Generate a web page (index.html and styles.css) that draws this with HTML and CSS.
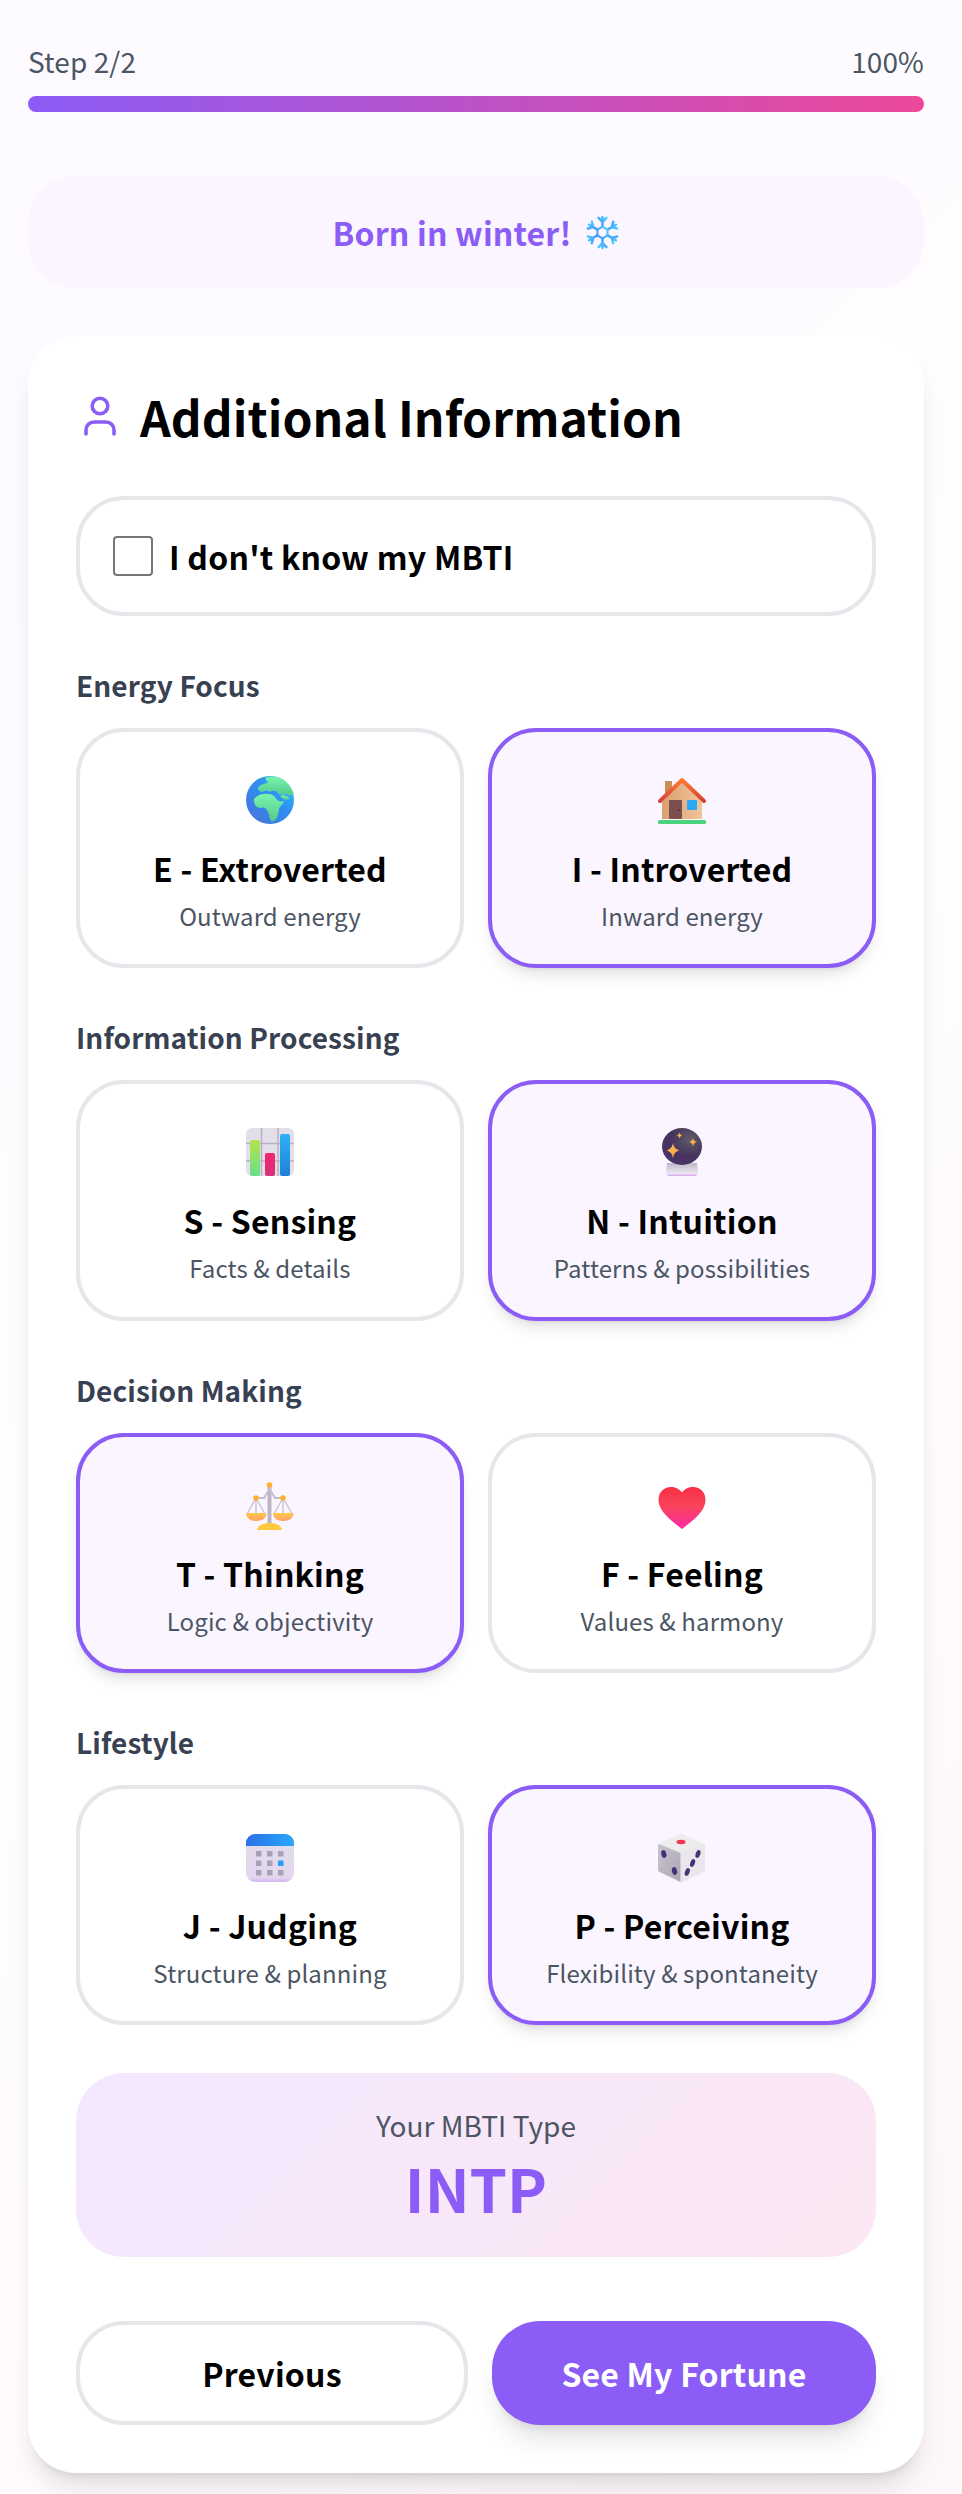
FILE: index.html
```html
<!DOCTYPE html>
<html lang="en">
<head>
<meta charset="utf-8">
<title>Additional Information</title>
<link rel="stylesheet" href="styles.css">
</head>
<body>
<svg class="defs" aria-hidden="true">
  <defs>
    <linearGradient id="g-globe" x1="0" y1="1" x2="1" y2="0"><stop offset="0" stop-color="#4a6fd8"/><stop offset=".55" stop-color="#2f8ff0"/><stop offset="1" stop-color="#2fc0ff"/></linearGradient>
    <linearGradient id="g-land" x1="0" y1="0" x2="0" y2="1"><stop offset="0" stop-color="#78f5ae"/><stop offset="1" stop-color="#55c98a"/></linearGradient>
    <linearGradient id="g-wall" x1="0" y1="0" x2="1" y2="0"><stop offset="0" stop-color="#d9a070"/><stop offset="1" stop-color="#f0c49a"/></linearGradient>
    <linearGradient id="g-roof" x1="0" y1="0" x2="0" y2="1"><stop offset="0" stop-color="#ff7a32"/><stop offset="1" stop-color="#d93f35"/></linearGradient>
    <linearGradient id="g-green" x1="0" y1="0" x2="0" y2="1"><stop offset="0" stop-color="#b4e24c"/><stop offset="1" stop-color="#68e08a"/></linearGradient>
    <linearGradient id="g-pink" x1="0" y1="0" x2="0" y2="1"><stop offset="0" stop-color="#f5246f"/><stop offset="1" stop-color="#d9307c"/></linearGradient>
    <linearGradient id="g-blue" x1="0" y1="0" x2="0" y2="1"><stop offset="0" stop-color="#2fb0fb"/><stop offset="1" stop-color="#2080d8"/></linearGradient>
    <radialGradient id="g-ball" cx=".7" cy=".3" r=".8"><stop offset="0" stop-color="#5f5a66"/><stop offset=".6" stop-color="#46335f"/><stop offset="1" stop-color="#4b3268"/></radialGradient>
    <linearGradient id="g-base" x1="0" y1="0" x2="0" y2="1"><stop offset="0" stop-color="#bdb6c9"/><stop offset=".82" stop-color="#ece7f1"/><stop offset="1" stop-color="#d59eef"/></linearGradient>
    <linearGradient id="g-star" x1="0" y1="0" x2="1" y2="1"><stop offset="0" stop-color="#ffc04a"/><stop offset="1" stop-color="#f59a4e"/></linearGradient>
    <linearGradient id="g-pan" x1="0" y1="0" x2="0" y2="1"><stop offset="0" stop-color="#ffc94a"/><stop offset="1" stop-color="#ff9f6a"/></linearGradient>
    <linearGradient id="g-heart" x1="0" y1="0" x2="0" y2="1"><stop offset="0" stop-color="#f62f45"/><stop offset=".45" stop-color="#fa4358"/><stop offset="1" stop-color="#fb2aa8"/></linearGradient>
    <linearGradient id="g-cal" x1="0" y1="0" x2="1" y2="0"><stop offset="0" stop-color="#2b6fe8"/><stop offset="1" stop-color="#2ba8fb"/></linearGradient>
    <linearGradient id="g-calb" x1="0" y1="0" x2="0" y2="1"><stop offset="0" stop-color="#e3dcec"/><stop offset=".9" stop-color="#e2d8ee"/><stop offset="1" stop-color="#d6b4f2"/></linearGradient>
    <linearGradient id="g-left" x1="0" y1="0" x2="1" y2="1"><stop offset="0" stop-color="#c9c5ce"/><stop offset="1" stop-color="#a9a4b2"/></linearGradient>
    <linearGradient id="g-snow" x1="0" y1="1" x2="1" y2="0"><stop offset="0" stop-color="#3f8ff0"/><stop offset="1" stop-color="#4fd2ff"/></linearGradient>
  </defs>
</svg>

<main class="page">
  <header class="progress">
    <div class="progress-labels"><span>Step 2/2</span><span>100%</span></div>
    <div class="progress-track"></div>
  </header>

  <div class="season">
    <span>Born in winter!</span>
    <svg class="season-icon" viewBox="0 0 36 36" fill="none" stroke="url(#g-snow)" stroke-width="2.6" stroke-linecap="round" stroke-linejoin="round">
      <g><path d="M18 12V2M18 7l-4-4M18 7l4-4"/></g>
      <g transform="rotate(60 18 18)"><path d="M18 12V2M18 7l-4-4M18 7l4-4"/></g>
      <g transform="rotate(120 18 18)"><path d="M18 12V2M18 7l-4-4M18 7l4-4"/></g>
      <g transform="rotate(180 18 18)"><path d="M18 12V2M18 7l-4-4M18 7l4-4"/></g>
      <g transform="rotate(240 18 18)"><path d="M18 12V2M18 7l-4-4M18 7l4-4"/></g>
      <g transform="rotate(300 18 18)"><path d="M18 12V2M18 7l-4-4M18 7l4-4"/></g>
      <path d="M18 12l5.2 3v6L18 24l-5.2-3v-6z" stroke-width="2"/>
    </svg>
  </div>

  <section class="card">
    <h1 class="card-title">
      <svg class="title-icon" viewBox="0 0 24 24" fill="none" stroke="#8b5cf6" stroke-width="1.8" stroke-linecap="round" stroke-linejoin="round"><circle cx="12" cy="7" r="3.900"/><path d="M19 21v-2a4 4 0 0 0-4-4H9a4 4 0 0 0-4 4v2"/></svg>
      Additional Information
    </h1>

    <label class="unknown"><input type="checkbox" class="unknown-box"><span>I don't know my MBTI</span></label>

    <div class="group">
      <h2 class="group-label">Energy Focus</h2>
      <div class="options">
        <button class="option">
          <svg class="emoji" viewBox="0 0 48 48">
            <circle cx="24" cy="24" r="24" fill="url(#g-globe)"/>
            <path d="M20 1.500C26 0 33 1 38 4.500C43 8 46 13 47.500 18L43 19L41 17L38 19L35 17L33 18L31 15L27 14L24 15.500L21 14L15 15.500L12 13L14 9.500L19 8L23 6.500L20 4z" fill="url(#g-land)" stroke="#6fe9a4" stroke-width=".6" stroke-linejoin="round"/>
            <path d="M34 19L41 20L44 22.500L40 24L36 22z" fill="url(#g-land)"/>
            <path d="M8 23C10 20 14 18 18 18C22 17.500 26 18.500 28 20C30 22 31 24.500 33 25C35 26 37 25 38 25C36.500 29 34 30 33 33C32 37 32 41 30 43C28 45.500 26 46 25 45C23 42 24 39 22 36C21 34 20 32 18 31.500C15 32 12.500 32 11 31C9 29.500 8 27 8 23z" fill="url(#g-land)"/>
          </svg>
          <span class="option-title">E - Extroverted</span>
          <span class="option-sub">Outward energy</span>
        </button>
        <button class="option is-selected">
          <svg class="emoji" viewBox="0 0 48 48">
            <rect x="7" y="5" width="7" height="14" fill="#c98f58"/>
            <path d="M4 26L24 6l20 20v17H4z" fill="url(#g-wall)"/>
            <path d="M2 25L24 4l22 21" fill="none" stroke="url(#g-roof)" stroke-width="4" stroke-linecap="round" stroke-linejoin="round"/>
            <rect x="11" y="24" width="13" height="19" rx="1" fill="#7a4f4c"/>
            <circle cx="21" cy="34" r=".8" fill="#3f2a2a"/>
            <rect x="29" y="24" width="10" height="10" rx="1" fill="#2aa8f5"/>
            <rect x="0" y="44" width="48" height="4" rx="1.500" fill="#4ad27c"/>
          </svg>
          <span class="option-title">I - Introverted</span>
          <span class="option-sub">Inward energy</span>
        </button>
      </div>
    </div>

    <div class="group">
      <h2 class="group-label">Information Processing</h2>
      <div class="options">
        <button class="option">
          <svg class="emoji" viewBox="0 0 48 48">
            <rect x="0" y="0" width="48" height="48" rx="6" fill="#e2deea"/>
            <path d="M15.500 0v48M32 0v48M0 15.500h48M0 33h48" stroke="#b8b2c0" stroke-width="1.500"/>
            <rect x="4" y="12" width="10" height="36" rx="2" fill="url(#g-green)"/>
            <rect x="19" y="25" width="10" height="23" rx="2" fill="url(#g-pink)"/>
            <rect x="34" y="6" width="10" height="42" rx="2" fill="url(#g-blue)"/>
          </svg>
          <span class="option-title">S - Sensing</span>
          <span class="option-sub">Facts &amp; details</span>
        </button>
        <button class="option is-selected">
          <svg class="emoji" viewBox="0 0 48 48">
            <path d="M9 35h30l1 10c0 2-2 3-3 3H11c-1 0-3-1-3-3z" fill="url(#g-base)"/>
            <ellipse cx="24" cy="18.500" rx="20" ry="18.500" fill="url(#g-ball)"/>
            <path d="M15 15c.8 4 2.500 6 6.500 7.500c-4 1-5.700 3-6.500 8c-.8-5-2.500-7-6.500-8c4-1.500 5.700-3.500 6.500-7.500z" fill="url(#g-star)"/>
            <path d="M35 10c.4 2 1.200 3 3.800 4c-2.600 1-3.400 2-3.800 4.500c-.4-2.500-1.200-3.500-3.800-4.500c2.600-1 3.400-2 3.800-4z" fill="url(#g-star)"/>
            <path d="M21.500 4.500c.3 1.500 1 2.300 2.700 3c-1.700.7-2.400 1.500-2.700 3.200c-.3-1.700-1-2.500-2.700-3.200c1.700-.7 2.400-1.500 2.700-3z" fill="url(#g-star)"/>
          </svg>
          <span class="option-title">N - Intuition</span>
          <span class="option-sub">Patterns &amp; possibilities</span>
        </button>
      </div>
    </div>

    <div class="group">
      <h2 class="group-label">Decision Making</h2>
      <div class="options">
        <button class="option is-selected">
          <svg class="emoji" viewBox="0 0 48 48">
            <path d="M10 17L1 33M10 17v16M10 17l9 16M37 17l-9 16M37 17v16M37 17l9 16" stroke="#c9bfd2" stroke-width="1.300" fill="none"/>
            <rect x="21.500" y="5" width="4" height="39" fill="#bdb4c6"/>
            <path d="M10 17h8l5.500-9l5.500 9h8" fill="none" stroke="#c6bccf" stroke-width="2"/>
            <path d="M0 32h20.500c0 5-4 8-10.200 8S0 37 0 32zM27 32h20.500c0 5-4 8-10.200 8S27 37 27 32z" fill="url(#g-pan)"/>
            <path d="M11 49c1-5 6-7 12.500-7s11.500 2 12.500 7z" fill="#ffc83d"/>
            <circle cx="23.500" cy="4" r="2.800" fill="#ffb02e"/>
            <circle cx="10" cy="17" r="2.800" fill="#ffb02e"/>
            <circle cx="37" cy="17" r="2.800" fill="#ffb02e"/>
          </svg>
          <span class="option-title">T - Thinking</span>
          <span class="option-sub">Logic &amp; objectivity</span>
        </button>
        <button class="option">
          <svg class="emoji" viewBox="0 0 48 48">
            <path d="M24 11.500C21 7.500 17 6 13 6C5.500 6 .5 11.500 .5 19C.5 31 15 41 24 48C33 41 47.500 31 47.500 19C47.500 11.500 42.500 6 35 6C31 6 27 7.500 24 11.500z" fill="url(#g-heart)"/>
          </svg>
          <span class="option-title">F - Feeling</span>
          <span class="option-sub">Values &amp; harmony</span>
        </button>
      </div>
    </div>

    <div class="group">
      <h2 class="group-label">Lifestyle</h2>
      <div class="options">
        <button class="option">
          <svg class="emoji" viewBox="0 0 48 48">
            <rect x="0" y="1" width="48" height="48" rx="9" fill="url(#g-calb)"/>
            <path d="M0 13v-3a9 9 0 0 1 9-9h30a9 9 0 0 1 9 9v3z" fill="url(#g-cal)"/>
            <g fill="#a9a1b5">
              <rect x="10" y="18" width="5.500" height="5.500"/><rect x="21" y="18" width="5.500" height="5.500"/><rect x="32" y="18" width="5.500" height="5.500"/>
              <rect x="10" y="27.500" width="5.500" height="5.500"/><rect x="21" y="27.500" width="5.500" height="5.500"/>
              <rect x="10" y="37" width="5.500" height="5.500"/><rect x="21" y="37" width="5.500" height="5.500"/><rect x="32" y="37" width="5.500" height="5.500"/>
            </g>
            <rect x="32" y="27.500" width="5.500" height="5.500" fill="#2a9df4"/>
          </svg>
          <span class="option-title">J - Judging</span>
          <span class="option-sub">Structure &amp; planning</span>
        </button>
        <button class="option is-selected">
          <svg class="emoji" viewBox="0 0 48 48">
            <path d="M23 1L46.500 11.500L23 21L.5 11.500z" fill="#ececec" stroke="#ececec" stroke-width="1" stroke-linejoin="round"/>
            <path d="M.5 11.500L23 20.500V49L.5 38z" fill="url(#g-left)" stroke="#c4c0ca" stroke-width="1" stroke-linejoin="round"/>
            <path d="M46.500 11.500L23 20.500V49L46.500 38z" fill="#e9e6ec" stroke="#e9e6ec" stroke-width="1" stroke-linejoin="round"/>
            <ellipse cx="23" cy="9" rx="4.500" ry="2.200" fill="#f0394f"/>
            <g fill="#433478">
              <ellipse cx="5.800" cy="21" rx="2.500" ry="4" transform="rotate(-15 5.800 21)"/>
              <ellipse cx="16.500" cy="38" rx="2.500" ry="4" transform="rotate(-15 16.500 38)"/>
              <ellipse cx="40" cy="21" rx="2.300" ry="4" transform="rotate(20 40 21)"/>
              <ellipse cx="34.600" cy="30" rx="2.300" ry="4" transform="rotate(20 34.600 30)"/>
              <ellipse cx="29.300" cy="39" rx="2.300" ry="4" transform="rotate(20 29.300 39)"/>
            </g>
          </svg>
          <span class="option-title">P - Perceiving</span>
          <span class="option-sub">Flexibility &amp; spontaneity</span>
        </button>
      </div>
    </div>

    <div class="result">
      <div class="result-label">Your MBTI Type</div>
      <div class="result-value">INTP</div>
    </div>

    <div class="actions">
      <button class="btn btn-prev">Previous</button>
      <button class="btn btn-next">See My Fortune</button>
    </div>
  </section>
</main>
</body>
</html>
```

FILE: styles.css
```css
* { box-sizing: border-box; }

html, body { margin: 0; padding: 0; }

body {
  min-height: 2494px;
  background: linear-gradient(135deg, #fcfaff 0%, #fffdff 50%, #fdf6fa 100%);
  font-family: "Noto Sans CJK JP", "Noto Sans", sans-serif;
  color: #000;
}

.defs { position: absolute; width: 0; height: 0; }

.page { width: 952px; padding: 40px 28px 21px; }

.progress-labels {
  display: flex;
  justify-content: space-between;
  font-size: 28px;
  line-height: 42px;
  letter-spacing: .1px;
  color: #4b5563;
}

.progress-track {
  height: 16px;
  margin-top: 14px;
  border-radius: 8px;
  background: linear-gradient(90deg, #8b5cf6, #ec4899);
}

.season {
  height: 112px;
  margin-top: 64px;
  border-radius: 48px;
  background: #faf5ff;
  display: flex;
  align-items: center;
  justify-content: center;
  gap: 13px;
  font-size: 32px;
  font-weight: 700;
  letter-spacing: .2px;
  color: #8b5cf6;
}

.season-icon { width: 35px; height: 35px; }

.card {
  margin-top: 48px;
  padding: 48px;
  border-radius: 48px;
  background: #fff;
  box-shadow: 0 20px 25px -5px rgba(0, 0, 0, .1), 0 8px 10px -6px rgba(0, 0, 0, .1);
}

.card-title {
  display: flex;
  align-items: center;
  gap: 16px;
  margin: 0 0 48px;
  font-size: 48px;
  line-height: 64px;
  font-weight: 700;
  letter-spacing: .07px;
}

.title-icon { width: 48px; height: 48px; flex: none; }

.unknown {
  display: flex;
  align-items: center;
  height: 120px;
  padding: 0 30px;
  border: 4px solid #e5e7eb;
  border-radius: 48px;
  font-size: 32px;
  font-weight: 700;
  letter-spacing: .24px;
}

.unknown-box {
  appearance: none;
  width: 40px;
  height: 40px;
  margin: 3px 16px 3px 3px;
  border: 2px solid #767676;
  border-radius: 4px;
  background: #fff;
}

.group { margin-top: 48px; }

.group-label {
  margin: 0 0 22px;
  font-size: 28px;
  line-height: 42px;
  font-weight: 700;
  letter-spacing: .1px;
  color: #374151;
}

.options {
  display: grid;
  grid-template-columns: 1fr 1fr;
  gap: 24px;
}

.option {
  display: flex;
  flex-direction: column;
  align-items: center;
  height: 240.33px;
  padding: 44px 16px 0;
  border: 4px solid #e5e7eb;
  border-radius: 48px;
  background: #fff;
  font-family: inherit;
  color: #000;
}

.option.is-selected {
  border-color: #8b5cf6;
  background: #faf5ff;
  box-shadow: 0 10px 15px -3px rgba(0, 0, 0, .1), 0 4px 6px -4px rgba(0, 0, 0, .1);
}

.emoji { width: 48px; height: 48px; flex: none; overflow: visible; }

.option-title {
  margin-top: 17px;
  font-size: 32px;
  line-height: 54px;
  font-weight: 700;
  letter-spacing: .2px;
}

.option-sub {
  margin-top: 1px;
  font-size: 24px;
  line-height: 39px;
  letter-spacing: .12px;
  color: #4b5563;
}

.result {
  margin-top: 48px;
  height: 184px;
  padding-top: 31px;
  border-radius: 48px;
  background: linear-gradient(135deg, #f3e8ff, #fce7f3);
  text-align: center;
}

.result-label {
  font-size: 28px;
  line-height: 42px;
  letter-spacing: .05px;
  color: #4b5563;
}

.result-value {
  margin-top: 1px;
  font-size: 60px;
  line-height: 80px;
  font-weight: 700;
  color: #8b5cf6;
}

.actions {
  display: flex;
  gap: 24px;
  margin-top: 64px;
}

.btn {
  box-sizing: content-box;
  flex: 1 1 0;
  height: 104px;
  padding: 0;
  border: 0;
  border-radius: 48px;
  font-family: inherit;
  font-size: 32px;
  font-weight: 700;
  letter-spacing: .2px;
}

.btn-prev {
  height: 96px;
  border: 4px solid #e5e7eb;
  background: #fff;
  color: #000;
}

.btn-next {
  background: #8b5cf6;
  color: #fff;
  box-shadow: 0 20px 25px -5px rgba(0, 0, 0, .1), 0 8px 10px -6px rgba(0, 0, 0, .1);
}
```
